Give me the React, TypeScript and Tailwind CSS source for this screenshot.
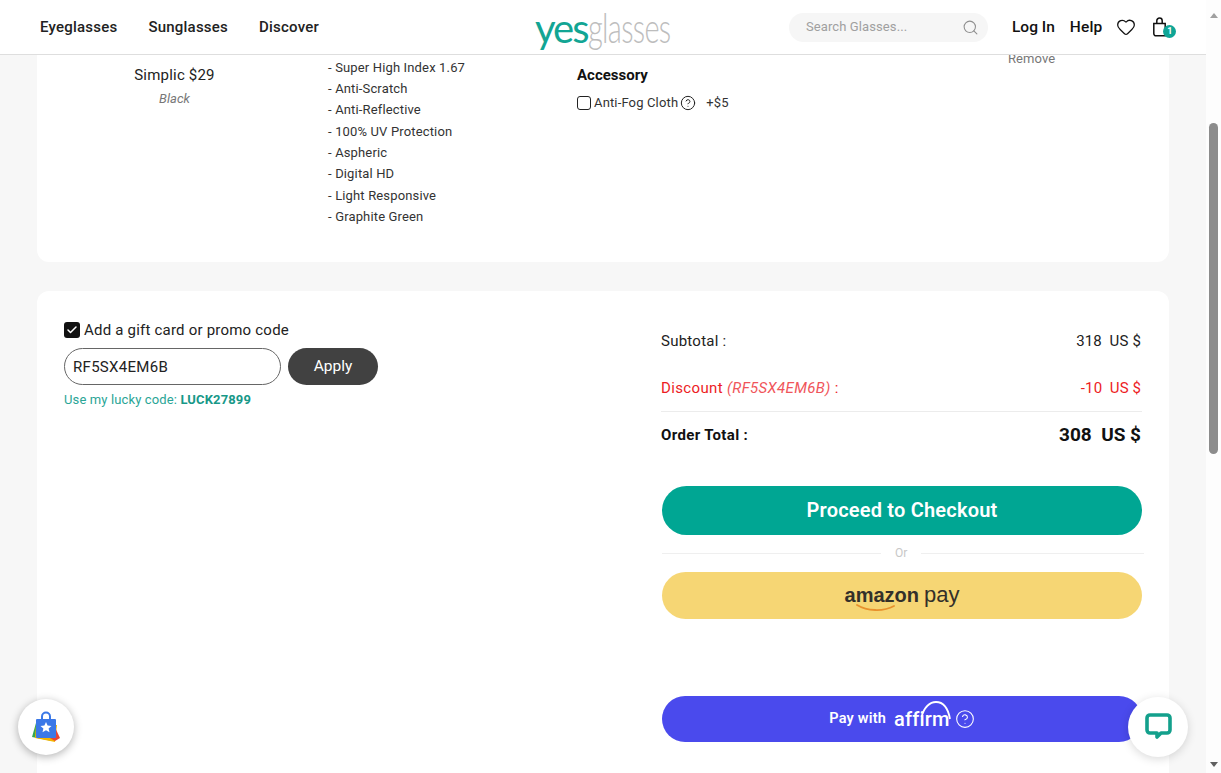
import { Heart, Search, CircleHelp, Check } from 'lucide-react'

const lensOptions = [
  'Super High Index 1.67',
  'Anti-Scratch',
  'Anti-Reflective',
  '100% UV Protection',
  'Aspheric',
  'Digital HD',
  'Light Responsive',
  'Graphite Green',
]

function Header() {
  return (
    <header className="relative z-10 flex h-[55px] shrink-0 items-center border-b border-[#dedede] bg-white pl-10 pr-[33px]">
      <nav className="flex w-[495px] gap-[31px] text-[15px] font-medium tracking-[0.22px] text-[#222]">
        <span>Eyeglasses</span>
        <span>Sunglasses</span>
        <span>Discover</span>
      </nav>
      <div className="flex w-[254px] items-baseline font-['Lato',sans-serif] leading-none">
        <span className="text-[40px] font-normal tracking-[-2px] text-[#12a594]">yes</span>
        <span className="origin-left scale-x-[0.69] text-[42px] font-light tracking-[-1px] text-[#bdbdbd]">glasses</span>
      </div>
      <div className="flex h-[29px] w-[199px] items-center justify-between rounded-full bg-[#f6f6f6] pl-[17px] pr-[9px] text-[13px] tracking-[0.1px] text-[#a0a0a0]">
        <span>Search Glasses...</span>
        <Search size={17} strokeWidth={1.5} className="text-[#8f8f8f]" />
      </div>
      <span className="ml-6 mt-px text-[15.5px] font-medium text-[#111]">Log In</span>
      <span className="ml-[15px] mt-px text-[15.5px] font-medium tracking-[0.15px] text-[#111]">Help</span>
      <Heart size={20} strokeWidth={1.5} className="ml-[15px] -translate-x-px text-[#111]" />
      <div className="relative ml-[14px] h-5 w-5">
        <svg viewBox="0 0 20 20" className="h-5 w-5" fill="none" stroke="#111" strokeWidth="1.5">
          <path d="M2.8 6.5h11.4v12.3H5a2.2 2.2 0 0 1-2.2-2.2z" />
          <path d="M5.8 6.5V3.8a2.7 2.7 0 0 1 5.4 0v2.7" />
        </svg>
        <span className="absolute left-3 top-2 flex h-[13px] w-[13px] items-center justify-center rounded-full bg-[#0fa596] text-[9px] font-bold text-white">
          1
        </span>
      </div>
    </header>
  )
}

function ItemCard() {
  return (
    <section className="flex h-[207px] shrink-0 rounded-b-xl bg-white text-[#333]">
      <div className="w-[275px] pt-[9px] text-center">
        <p className="text-[15px] leading-[22px] tracking-[0.2px] text-[#222]">Simplic $29</p>
        <p className="mt-[3px] text-[13px] italic leading-5 text-[#777]">Black</p>
      </div>
      <ul className="ml-4 w-[249px] pt-[1.5px] text-[13px] leading-[21.35px] tracking-[0.15px] text-[#333]">
        {lensOptions.map(option => (
          <li key={option}>- {option}</li>
        ))}
      </ul>
      <div className="w-[431px] pt-[9px]">
        <p className="text-[15px] font-bold leading-[22px] text-[#111]">Accessory</p>
        <div className="mt-[7px] flex items-center text-[13px] tracking-[0.15px] text-[#333]">
          <span className="h-[14px] w-[14px] rounded-[3px] border border-[#222]" />
          <span className="ml-[3px]">Anti-Fog Cloth</span>
          <CircleHelp size={16} strokeWidth={1.5} className="ml-[2px] text-[#222]" />
          <span className="ml-[10px]">+$5</span>
        </div>
      </div>
      <div className="-mt-[6px] text-[13px] leading-5 tracking-[0.1px] text-[#777]">Remove</div>
    </section>
  )
}

function PromoColumn() {
  return (
    <div className="w-[597px] shrink-0 pt-[29px]">
      <label className="flex items-center gap-1 text-[15px] leading-5 tracking-[0.21px] text-[#222]">
        <span className="flex h-4 w-4 items-center justify-center rounded-[3px] bg-[#111]">
          <Check size={12} strokeWidth={3} className="text-white" />
        </span>
        Add a gift card or promo code
      </label>
      <div className="mt-2 flex gap-[7px]">
        <div className="flex h-[37px] w-[217px] items-center rounded-full border border-[#666] pl-2 pt-px text-[15px] tracking-[0.3px] text-[#222]">
          RF5SX4EM6B
        </div>
        <button className="h-[37px] w-[90px] rounded-full bg-[#414141] text-[15.5px] text-white">
          Apply
        </button>
      </div>
      <p className="mt-[6px] text-[13px] leading-[18px] tracking-[0.13px] text-[#2aa596]">
        Use my lucky code: <b className="font-bold text-[#179888]">LUCK27899</b>
      </p>
    </div>
  )
}

function SummaryColumn() {
  return (
    <div className="w-[481px] shrink-0 pt-[27px]">
      <div className="flex h-[47px] items-start justify-between pr-[1px] pt-[13px] text-[15px] leading-[20px] tracking-[0.25px] text-[#222]">
        <span>Subtotal :</span>
        <span className="tracking-[0.15px]">318&nbsp; US $</span>
      </div>
      <div className="flex h-[47px] items-start justify-between border-b border-[#ececec] pr-[1px] pt-[13px] text-[15px] leading-[20px] tracking-[0.35px] text-[#ed1c24]">
        <span>
          Discount <i className="text-[#f0555a]">(RF5SX4EM6B)</i> :
        </span>
        <span className="tracking-[0.1px]">-10&nbsp; US $</span>
      </div>
      <div className="flex h-[47px] items-center justify-between pr-[1px] font-bold text-[#111]">
        <span className="text-[15px] tracking-[0.35px]">Order Total :</span>
        <span className="text-[19px]">308&nbsp; US $</span>
      </div>
      <button className="mt-[27px] ml-[1px] h-[49px] w-[480px] rounded-full bg-[#00a693] pb-[2px] text-xl font-semibold tracking-[0.2px] text-white">
        Proceed to Checkout
      </button>
      <div className="ml-[1px] mt-2 flex h-5 w-[482px] items-center gap-[14px] text-xs text-[#c8c8c8]">
        <span className="h-px w-[219px] bg-[#efefef]" />
        Or
        <span className="h-px flex-1 bg-[#efefef]" />
      </div>
      <button className="ml-[1px] mt-[9px] flex h-[47px] w-[480px] items-center justify-center rounded-full bg-[#f6d674] pb-[2px] text-[#33302a]">
        <span className="relative font-['Liberation_Sans',sans-serif] text-xl font-bold leading-none">
          amazon
          <svg viewBox="0 0 40 8" className="absolute bottom-[-7px] left-[11px] h-2 w-10" fill="none">
            <path d="M1 1c10 6 26 7 37 1" stroke="#e8912d" strokeWidth="1.8" strokeLinecap="round" />
          </svg>
        </span>
        <span className="ml-[5px] font-['Liberation_Sans',sans-serif] text-[22px] leading-none">pay</span>
      </button>
      <button className="ml-[1px] mt-[77px] flex h-[46px] w-[480px] items-center justify-center rounded-full bg-[#4a4aed] pb-[1px] text-[14.5px] font-semibold tracking-[0.2px] text-white">
        Pay with
        <span className="relative ml-2 text-xl font-medium leading-none">
          affirm
          <svg viewBox="0 0 32 20" className="absolute -top-[9px] left-[26px] h-5 w-8" fill="none">
            <path d="M1.5 17C4 7 10 2 16 2c7 0 12 6 14 17" stroke="white" strokeWidth="1.8" />
          </svg>
        </span>
        <CircleHelp size={20} strokeWidth={1.3} className="ml-[5px]" />
      </button>
    </div>
  )
}

function FakeScrollbar() {
  return (
    <div className="flex w-[15px] shrink-0 flex-col items-center bg-[#fdfdfd]">
      <span className="mt-[13px] h-0 w-0 border-x-[4px] border-b-[5px] border-x-transparent border-b-[#a0a0a0]" />
      <span className="mt-[105px] h-[331px] w-[9px] rounded-full bg-[#8c8c8c]" />
      <span className="mt-[308px] h-0 w-0 border-x-[4px] border-t-[5px] border-x-transparent border-t-[#606060]" />
    </div>
  )
}

export default function App() {
  return (
    <div className="relative flex h-screen overflow-hidden bg-[#f7f7f7] font-['Roboto',sans-serif]">
      <div className="flex min-w-0 flex-1 flex-col">
        <Header />
        <main className="flex flex-1 flex-col gap-[29px] px-[37px]">
          <ItemCard />
          <section className="flex h-[600px] shrink-0 rounded-t-xl bg-white pl-[27px]">
            <PromoColumn />
            <SummaryColumn />
          </section>
        </main>
      </div>
      <FakeScrollbar />

      <div className="absolute bottom-[18px] left-[18px] flex h-14 w-14 items-center justify-center rounded-full bg-white shadow-[0_2px_8px_rgba(0,0,0,0.3)]">
        <svg viewBox="0 0 32 32" className="h-8 w-8">
          <polygon points="6,12 2,26 22,30 24,12" fill="#34a853" />
          <polygon points="6,14 5,27 25,31 27,14" fill="#f4b400" />
          <polygon points="22,10 30,27 25,30 20,27" fill="#ea4335" />
          <rect x="6" y="8" width="20" height="19" rx="1" fill="#3b78e7" />
          <path d="M12 8V5.5a4 4 0 0 1 8 0V8" fill="none" stroke="#3b78e7" strokeWidth="2" />
          <path d="M16 11l1.6 3.5 3.9.4-2.9 2.5.9 3.8-3.5-2-3.5 2 .9-3.8-2.9-2.5 3.9-.4z" fill="#fff" />
        </svg>
      </div>
      <div className="absolute bottom-4 left-[1128px] flex h-[60px] w-[60px] items-center justify-center rounded-full bg-white shadow-[0_2px_10px_rgba(0,0,0,0.15)]">
        <svg viewBox="0 0 32 32" className="h-8 w-8" fill="none">
          <path
            d="M8 4h17a3 3 0 0 1 3 3v12a3 3 0 0 1-3 3h-6l-4 4v-4H8a3 3 0 0 1-3-3V7a3 3 0 0 1 3-3z"
            stroke="#13a08c"
            strokeWidth="3.6"
            strokeLinejoin="round"
          />
        </svg>
      </div>
    </div>
  )
}
